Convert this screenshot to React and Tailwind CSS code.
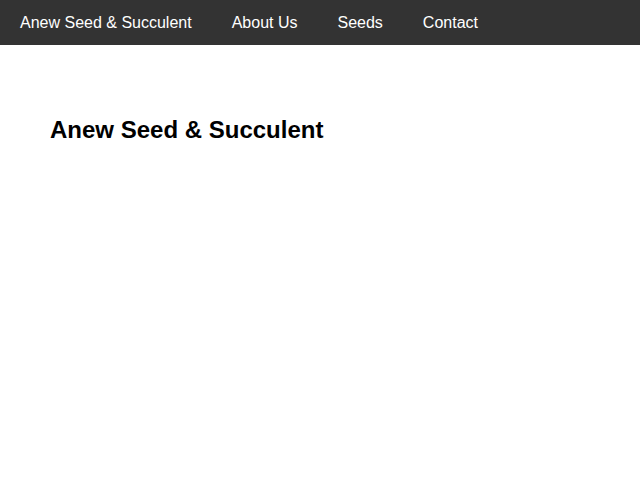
import React from 'react';

const links = ['Anew Seed & Succulent', 'About Us', 'Seeds', 'Contact'];

export default function App() {
  return (
    <div className="min-h-screen bg-white" style={{ fontFamily: '"Liberation Sans", Arial, sans-serif' }}>
      <nav className="flex h-[45px] items-center bg-[#333333]">
        {links.map((l) => (
          <a key={l} href="#" className="px-[20px] text-[16px] text-white">
            {l}
          </a>
        ))}
      </nav>
      <main className="px-[50px] pt-[67px]">
        <h1 className="text-[24px] font-bold text-black">Anew Seed &amp; Succulent</h1>
      </main>
    </div>
  );
}
